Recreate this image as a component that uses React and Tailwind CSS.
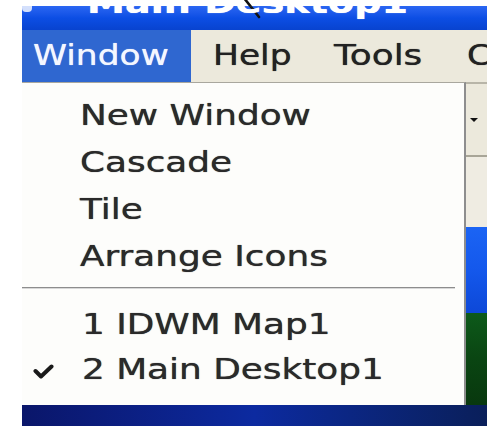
import React from "react";

// Wide Tahoma-like lettering: DejaVu Sans stretched horizontally
function Label({ children, wide = false, className = "" }) {
  return (
    <span
      className={`inline-block origin-left whitespace-pre [text-shadow:0_0_0.7px_currentColor] ${
        wide ? "scale-x-[1.28]" : "scale-x-[1.23]"
      } ${className}`}
    >
      {children}
    </span>
  );
}

function CheckMark() {
  return (
    <svg width="21" height="15" viewBox="0 0 21 15" className="block">
      <path d="M2.5 7 L8 12.5 L18.5 2.5" fill="none" stroke="#1a1a1a" strokeWidth="4" strokeLinecap="round" strokeLinejoin="round" />
    </svg>
  );
}

const commands = ["New Window", "Cascade", "Tile", "Arrange Icons"];
const windows = [
  { label: "1 IDWM Map1", checked: false },
  { label: "2 Main Desktop1", checked: true },
];

export default function App() {
  return (
    <div className="relative w-[487px] h-[426px] overflow-hidden bg-white pl-[22px] pt-[6px] font-['DejaVu_Sans',sans-serif] text-[28px]">
      {/* mouse pointer tail */}
      <svg className="absolute left-[240px] top-0" width="24" height="22" viewBox="0 0 24 22">
        <path d="M4 -2 L19 17" stroke="#111" strokeWidth="2.6" strokeLinecap="round" />
      </svg>

      <div className="flex flex-col">
        {/* title bar, caption mostly scrolled off the top */}
        <div className="h-[24px] overflow-hidden bg-gradient-to-b from-[#2a66f2] via-[#0c4ee4] to-[#0843cf]">
          <div className="flex items-start">
            <div className="mt-[-6px] h-[12px] w-[10px] rounded-sm bg-white/80" />
            <div className="ml-[55px] -mt-[19px] font-bold text-[31px] leading-[30px] text-white">
              <Label>Main Desktop1</Label>
            </div>
          </div>
        </div>

        {/* menu bar */}
        <div className="flex h-[52px] bg-[#ece9dc] leading-[52px] text-[#222]">
          <div className="w-[173px] bg-[#2f67d0] pl-[11px] text-[#f4f7ff]">
            <Label>Window</Label>
          </div>
          <div className="ml-[22px] w-[124px]">
            <Label>Help</Label>
          </div>
          <div className="w-[137px]">
            <Label wide>Tools</Label>
          </div>
          <div>
            <Label>C</Label>
          </div>
        </div>

        <div className="flex h-[323px]">
          {/* Window dropdown */}
          <div className="flex w-[444px] flex-col border-t border-r-2 border-t-[#a9a79e] border-r-[#8e8e8e] bg-[#fdfdfb] pt-[9px] text-[#2a2a2a]">
            {commands.map((c) => (
              <div key={c} className="h-[47px] pl-[58px] leading-[47px]">
                <Label wide>{c}</Label>
              </div>
            ))}
            <div className="mt-[7px] mb-[13px] h-[2px] w-[433px] border-t border-[#8d8d8d] bg-[#d8d8d8]" />
            {windows.map((w) => (
              <div key={w.label} className="flex h-[45px] items-center leading-[45px]">
                <div className="w-[60px] pl-[11px] pt-[4px]">{w.checked && <CheckMark />}</div>
                <Label wide>{w.label}</Label>
              </div>
            ))}
          </div>

          {/* desktop peeking out to the right */}
          <div className="flex flex-1 flex-col">
            <div className="flex h-[145px] flex-col border-t-2 border-[#b8b5a8] bg-[#ece9dc]">
              <div className="flex h-[71px] items-center pl-[4px]">
                <div className="h-0 w-0 border-x-[4px] border-t-[4px] border-x-transparent border-t-[#111]" />
              </div>
              <div className="h-[2px] bg-[#a8a597]" />
              <div className="flex-1 bg-[#efece2]" />
            </div>
            <div className="h-[86px] bg-gradient-to-b from-[#1b64f4] via-[#1458ec] to-[#0d48d8]" />
            <div className="flex-1 bg-gradient-to-b from-[#0d5a1a] via-[#0a4512] to-[#08380e]" />
          </div>
        </div>

        {/* desktop below the menu */}
        <div className="h-[21px] bg-gradient-to-r from-[#0a166a] via-[#0c2aa0] to-[#0a1f5a]" />
      </div>
    </div>
  );
}
